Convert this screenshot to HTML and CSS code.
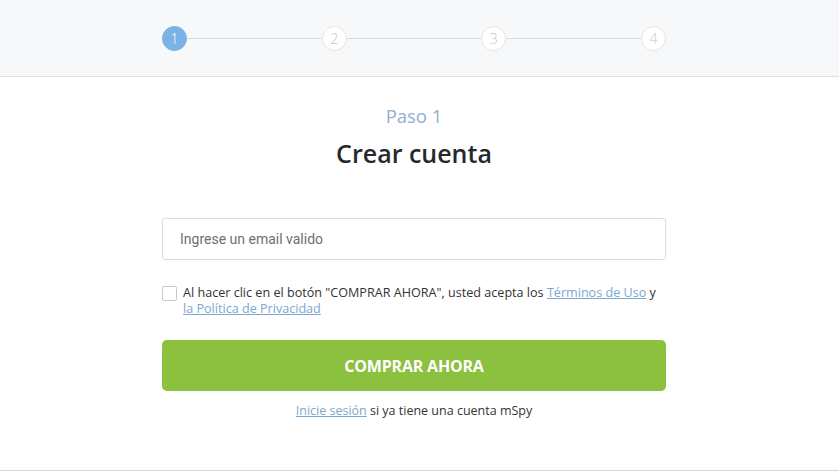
FILE: index.html
```html
<!DOCTYPE html>
<html lang="es">
<head>
<meta charset="utf-8">
<link rel="stylesheet" href="styles.css">
</head>
<body>
<header class="steps-bar">
  <div class="steps">
    <span class="step active">1</span>
    <span class="line"></span>
    <span class="step">2</span>
    <span class="line"></span>
    <span class="step">3</span>
    <span class="line"></span>
    <span class="step">4</span>
  </div>
</header>
<main class="content">
  <div class="form">
    <div class="step-label">Paso 1</div>
    <h1 class="title">Crear cuenta</h1>
    <input class="email" type="text" placeholder="Ingrese un email valido">
    <label class="terms">
      <span class="box"></span>
      <span class="terms-text">Al hacer clic en el botón "COMPRAR AHORA", usted acepta los <a href="#">Términos de Uso</a> y <a class="nowrap" href="#">la Política de Privacidad</a></span>
    </label>
    <button class="buy">COMPRAR AHORA</button>
    <p class="login"><a href="#">Inicie sesión</a> si ya tiene una cuenta mSpy</p>
  </div>
</main>
</body>
</html>
```
FILE: styles.css
```css
* { box-sizing: border-box; }
html, body { margin: 0; padding: 0; }
body {
  width: 839px;
  height: 471px;
  overflow: hidden;
  font-family: "Open Sans", "Liberation Sans", sans-serif;
  background: #fff;
  border-bottom: 1px solid #d6d6d6;
}
.steps-bar {
  height: 77px;
  background: #f7f8fa;
  border-bottom: 1px solid #dfe1e4;
  display: flex;
  padding: 26px 0 0 162px;
}
.steps {
  width: 504px;
  display: flex;
  align-items: center;
  height: 24px;
}
.step {
  width: 25px;
  height: 25px;
  border-radius: 50%;
  border: 1px solid #e3e5e8;
  background: #fff;
  color: #c4c7cb;
  font-size: 14px;
  display: flex;
  align-items: center;
  justify-content: center;
  flex: none;
  font-weight: 300;
}
.step.active {
  background: #7bb3e6;
  border-color: #7bb3e6;
  color: #fff;
}
.line {
  flex: 1;
  height: 1px;
  background: #d7dadd;
}
.content {
  display: flex;
  padding-left: 162px;
}
.form {
  width: 504px;
  display: flex;
  flex-direction: column;
}
.step-label {
  margin-top: 27px;
  text-align: center;
  color: #8fb0cf;
  font-size: 18.5px;
  line-height: 24px;
}
.title {
  margin: 9px 0 0;
  text-align: center;
  font-size: 25px;
  font-weight: 600;
  color: #24292e;
  line-height: 32px;
}
.email {
  margin-top: 49px;
  height: 42px;
  width: 100%;
  border: 1px solid #dcdcdc;
  border-radius: 3px;
  padding: 0 17px;
  font-family: Roboto, "Liberation Sans", sans-serif;
  font-size: 14px;
  color: #333;
  outline: none;
}
.email::placeholder { color: #6f6f6f; }
.terms {
  margin-top: 25px;
  display: flex;
  align-items: flex-start;
  font-size: 12.6px;
  line-height: 16px;
  color: #333;
}
.box {
  width: 15px;
  height: 15px;
  border: 1px solid #c9c9c9;
  border-radius: 2px;
  flex: none;
  margin: 1px 6px 0 0;
  background: #fff;
}
.terms a, .login a {
  color: #7aa8cf;
  text-decoration: underline;
}
.terms a.nowrap { white-space: nowrap; }
.buy {
  margin-top: 23px;
  height: 51px;
  width: 100%;
  border: none;
  border-radius: 5px;
  background: #8cc03f;
  color: #fff;
  font-family: "Open Sans", "Liberation Sans", sans-serif;
  font-weight: 700;
  font-size: 16px;
  letter-spacing: -0.2px;
}
.login {
  margin: 11px 0 0;
  text-align: center;
  font-size: 12.5px;
  color: #333;
  line-height: 18px;
}
```
